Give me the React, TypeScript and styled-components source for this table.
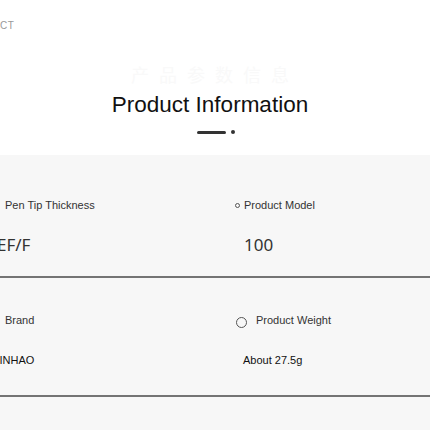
import styled, { createGlobalStyle } from "styled-components";

const GlobalStyle = createGlobalStyle`
  html, body {
    margin: 0;
    padding: 0;
    background: #ffffff;
    overflow: hidden;
  }
  body {
    font-family: "Liberation Sans", Arial, sans-serif;
  }
`;

const specs = [
  {
    left: { label: "Pen Tip Thickness", value: "EF/F" },
    right: { label: "Product Model", value: "100", dot: "small" as const },
    valueFont: "noto" as const,
  },
  {
    left: { label: "Brand", value: "JINHAO" },
    right: { label: "Product Weight", value: "About 27.5g", dot: "large" as const },
    valueFont: "arial" as const,
  },
];

const App = () => {
  return (
    <Page>
      <GlobalStyle />
      <Header>
        <Eyebrow>CT</Eyebrow>
        <Watermark>产品参数信息</Watermark>
        <Title>Product Information</Title>
        <Decor>
          <span className="bar" />
          <span className="dot" />
        </Decor>
      </Header>
      <Specs>
        {specs.map((row, i) => (
          <Row key={i} $second={i === 1}>
            <Cell>
              <Label $indent={5}>{row.left.label}</Label>
              <Value $font={row.valueFont} $shift={row.valueFont === "noto" ? -3 : -6}>
                {row.left.value}
              </Value>
            </Cell>
            <Cell>
              <Label $indent={row.right.dot === "small" ? 0 : 1}>
                <Ring $size={row.right.dot === "small" ? 5 : 11} $gap={row.right.dot === "small" ? 4 : 9} />
                {row.right.label}
              </Label>
              <Value $font={row.valueFont} $shift={row.valueFont === "noto" ? 9 : 8}>
                {row.right.value}
              </Value>
            </Cell>
          </Row>
        ))}
      </Specs>
    </Page>
  );
};

export default App;

const Page = styled.div`
  width: 430px;
  height: 430px;
  display: flex;
  flex-direction: column;
  background: #ffffff;
`;

const Header = styled.div`
  height: 155px;
  display: flex;
  flex-direction: column;
  align-items: center;
`;

const Eyebrow = styled.div`
  align-self: flex-start;
  margin-top: 20px;
  font-size: 10px;
  line-height: 12px;
  color: #999999;
  letter-spacing: 0.5px;
`;

const Watermark = styled.div`
  margin-top: 31px;
  font-family: "Noto Sans CJK SC", sans-serif;
  font-size: 18px;
  line-height: 22px;
  letter-spacing: 10px;
  color: #f9f9f9;
`;

const Title = styled.h1`
  margin: 7px 10px 0 0;
  font-size: 22.5px;
  line-height: 26px;
  font-weight: 400;
  color: #111111;
`;

const Decor = styled.div`
  margin-top: 12px;
  display: flex;
  align-items: center;
  gap: 5px;
  margin-left: 2px;

  .bar {
    width: 29px;
    height: 3px;
    border-radius: 2px;
    background: #333333;
  }

  .dot {
    width: 4px;
    height: 4px;
    border-radius: 50%;
    background: #333333;
  }
`;

const Specs = styled.div`
  flex: 1;
  background: #f7f7f7;
  display: flex;
  flex-direction: column;
`;

const Row = styled.div<{ $second: boolean }>`
  display: grid;
  grid-template-columns: 235px 1fr;
  height: ${(p) => (p.$second ? "119px" : "123px")};
  padding-top: ${(p) => (p.$second ? "35px" : "43px")};
  box-sizing: border-box;
  border-bottom: 2px solid #747474;
`;

const Cell = styled.div`
  display: flex;
  flex-direction: column;
  gap: 23px;
`;

const Label = styled.div<{ $indent: number }>`
  display: flex;
  align-items: center;
  padding-left: ${(p) => p.$indent}px;
  font-size: 11px;
  line-height: 14px;
  color: #333333;
  white-space: nowrap;
`;

const Ring = styled.span<{ $size: number; $gap: number }>`
  width: ${(p) => p.$size - 2}px;
  height: ${(p) => p.$size - 2}px;
  border: 1px solid #555555;
  border-radius: 50%;
  margin-right: ${(p) => p.$gap}px;
  flex-shrink: 0;
  position: relative;
  top: ${(p) => (p.$size > 6 ? 2 : 0)}px;
`;

const Value = styled.div<{ $font: "noto" | "arial"; $shift: number }>`
  margin-left: ${(p) => p.$shift}px;
  white-space: nowrap;
  ${(p) =>
    p.$font === "noto"
      ? `
    font-family: "Noto Sans", sans-serif;
    font-size: 17px;
    line-height: 20px;
    color: #333333;
  `
      : `
    font-family: "Liberation Sans", Arial, sans-serif;
    font-size: 11px;
    line-height: 14px;
    color: #111111;
    margin-top: 3px;
  `}
`;
